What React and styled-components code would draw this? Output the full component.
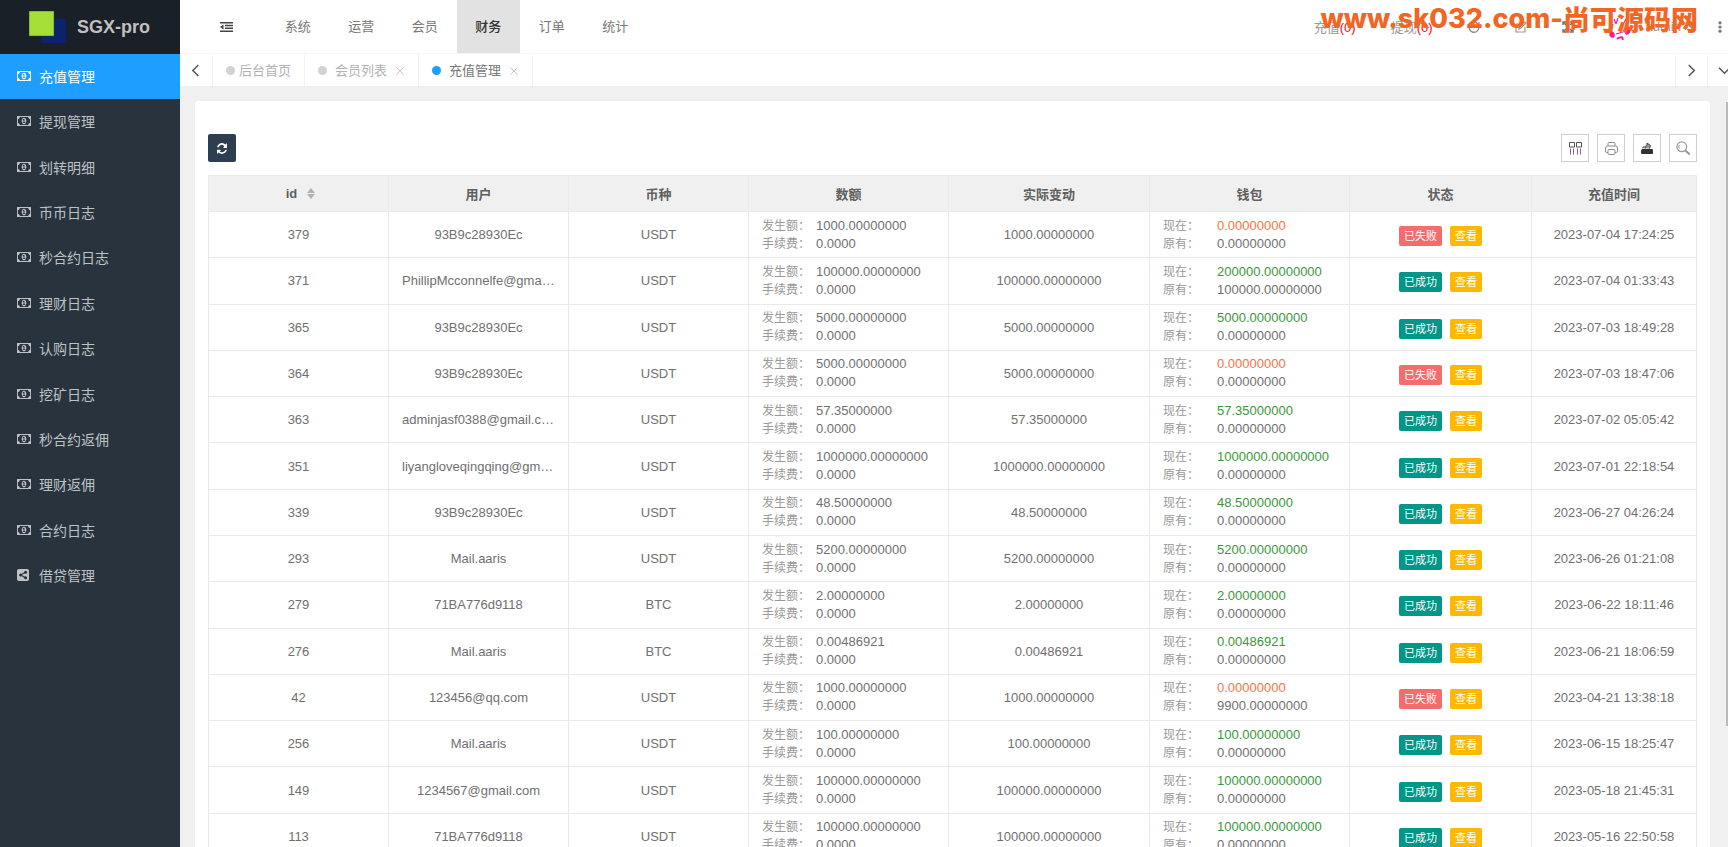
import React, { useState } from 'react'
import styled, { createGlobalStyle } from 'styled-components'

const sideMenu = [
    '充值管理', '提现管理', '划转明细', '币币日志', '秒合约日志', '理财日志',
    '认购日志', '挖矿日志', '秒合约返佣', '理财返佣', '合约日志', '借贷管理',
]

const topMenu = ['系统', '运营', '会员', '财务', '订单', '统计']

const records = [
    { id: 379, user: '93B9c28930Ec', coin: 'USDT', amount: '1000.00000000', now: '0.00000000', old: '0.00000000', ok: false, time: '2023-07-04 17:24:25' },
    { id: 371, user: 'PhillipMcconnelfe@gmail.com', coin: 'USDT', amount: '100000.00000000', now: '200000.00000000', old: '100000.00000000', ok: true, time: '2023-07-04 01:33:43' },
    { id: 365, user: '93B9c28930Ec', coin: 'USDT', amount: '5000.00000000', now: '5000.00000000', old: '0.00000000', ok: true, time: '2023-07-03 18:49:28' },
    { id: 364, user: '93B9c28930Ec', coin: 'USDT', amount: '5000.00000000', now: '0.00000000', old: '0.00000000', ok: false, time: '2023-07-03 18:47:06' },
    { id: 363, user: 'adminjasf0388@gmail.com', coin: 'USDT', amount: '57.35000000', now: '57.35000000', old: '0.00000000', ok: true, time: '2023-07-02 05:05:42' },
    { id: 351, user: 'liyangloveqingqing@gmail.com', coin: 'USDT', amount: '1000000.00000000', now: '1000000.00000000', old: '0.00000000', ok: true, time: '2023-07-01 22:18:54' },
    { id: 339, user: '93B9c28930Ec', coin: 'USDT', amount: '48.50000000', now: '48.50000000', old: '0.00000000', ok: true, time: '2023-06-27 04:26:24' },
    { id: 293, user: 'Mail.aaris', coin: 'USDT', amount: '5200.00000000', now: '5200.00000000', old: '0.00000000', ok: true, time: '2023-06-26 01:21:08' },
    { id: 279, user: '71BA776d9118', coin: 'BTC', amount: '2.00000000', now: '2.00000000', old: '0.00000000', ok: true, time: '2023-06-22 18:11:46' },
    { id: 276, user: 'Mail.aaris', coin: 'BTC', amount: '0.00486921', now: '0.00486921', old: '0.00000000', ok: true, time: '2023-06-21 18:06:59' },
    { id: 42, user: '123456@qq.com', coin: 'USDT', amount: '1000.00000000', now: '0.00000000', old: '9900.00000000', ok: false, time: '2023-04-21 13:38:18' },
    { id: 256, user: 'Mail.aaris', coin: 'USDT', amount: '100.00000000', now: '100.00000000', old: '0.00000000', ok: true, time: '2023-06-15 18:25:47' },
    { id: 149, user: '1234567@gmail.com', coin: 'USDT', amount: '100000.00000000', now: '100000.00000000', old: '0.00000000', ok: true, time: '2023-05-18 21:45:31' },
    { id: 113, user: '71BA776d9118', coin: 'USDT', amount: '100000.00000000', now: '100000.00000000', old: '0.00000000', ok: true, time: '2023-05-16 22:50:58' },
]

const MoneyIcon = () => (
    <svg width="14" height="10" viewBox="0 256 1920 1280" fill="currentColor" preserveAspectRatio="none">
        <path d="M768 1152h384v-96h-128v-448h-114l-148 137 77 80q42-37 55-57h2v288h-128v96zm512-256q0 70-21 142t-59.5 134-101.5 101-138 39-138-39-101.5-101-59.5-134-21-142 21-142 59.5-134 101.5-101 138-39 138 39 101.5 101 59.5 134 21 142zm512 256v-512q-106 0-181-75t-75-181h-1152q0 106-75 181t-181 75v512q106 0 181 75t75 181h1152q0-106 75-181t181-75zm128-832v1152q0 26-19 45t-45 19h-1792q-26 0-45-19t-19-45v-1152q0-26 19-45t45-19h1792q26 0 45 19t19 45z" />
    </svg>
)

const ShareIcon = () => (
    <svg width="12" height="12" viewBox="0 0 12 12">
        <rect width="12" height="12" rx="2" fill="currentColor" />
        <path d="M8.6 3.2 3.6 6l5 2.8" fill="none" stroke="#28333e" strokeWidth="1.1" />
        <circle cx="8.6" cy="3.2" r="1.5" fill="#28333e" />
        <circle cx="3.6" cy="6" r="1.5" fill="#28333e" />
        <circle cx="8.6" cy="8.8" r="1.5" fill="#28333e" />
    </svg>
)

const RefreshIcon = () => (
    <svg width="10" height="11" viewBox="0 0 1536 1664" fill="currentColor">
        <path d="M1511 1056q0 5-1 7-64 268-268 434.5T764 1664q-146 0-282.5-55T238 1452l-129 129q-19 19-45 19t-45-19-19-45v-448q0-26 19-45t45-19h448q26 0 45 19t19 45-19 45l-137 137q71 66 161 102t187 36q134 0 250-65t186-179q11-17 53-117 8-23 30-23h192q13 0 22.500 9.500t9.500 22.500zm25-800v448q0 26-19 45t-45 19h-448q-26 0-45-19t-19-45 19-45l138-138Q969 256 768 256q-134 0-250 65T332 500q-11 17-53 117-8 23-30 23H50q-13 0-22.500-9.500T18 608v-7q65-268 270-434.500T768 0q146 0 284 55.500T1297 212l130-129q19-19 45-19t45 19 19 45z" />
    </svg>
)

const Chevron = ({ dir }) => {
    const paths = { left: 'M9 1 3 7l6 6', right: 'M4 1l6 6-6 6', down: 'M1 4l6 6 6-6' }
    return (
        <svg width="13" height="13" viewBox="0 0 14 14" fill="none" stroke="#555" strokeWidth="1.600">
            <path d={paths[dir]} />
        </svg>
    )
}

function Sidebar() {
    const [active, setActive] = useState('充值管理')

    return (
        <Aside>
            <Logo>
                <svg width="37" height="32" viewBox="0 0 37 32">
                    <rect x="12" y="8" width="25" height="24" fill="#0b226c" />
                    <rect x="0" y="0" width="25" height="25" fill="#a4de37" stroke="#33501f" strokeWidth="0.500" />
                </svg>
                <span>SGX-pro</span>
            </Logo>
            <SideNav>
                {
                    sideMenu.map((name) => (
                        <SideLink key={name} href="#" $active={name === active} onClick={() => setActive(name)}>
                            <SideIcon>{name === '借贷管理' ? <ShareIcon /> : <MoneyIcon />}</SideIcon>
                            {name}
                        </SideLink>
                    ))
                }
            </SideNav>
        </Aside>
    )
}

function Header() {
    return (
        <TopBar>
            <FoldButton aria-label="menu">
                <svg width="13" height="10" viewBox="0 0 13 10" fill="#444">
                    <path d="M0 0h13v1.500H0zM5 2.800h8v1.500H5zM5 5.600h8v1.500H5zM0 8.500h13V10H0zM3.500 2.600v4.800L0 5z" />
                </svg>
            </FoldButton>
            <TopNav>
                {
                    topMenu.map((name) => <TopLink key={name} href="#" $active={name === '财务'}>{name}</TopLink>)
                }
            </TopNav>
            <Tools>
                <ToolLink href="#">充值<Count>(0)</Count></ToolLink>
                <ToolLink href="#">提现<Count>(0)</Count></ToolLink>
                <ToolButton aria-label="refresh">
                    <svg width="12" height="12" viewBox="0 0 12 12" fill="none" stroke="#888" strokeWidth="1.300">
                        <path d="M10.500 4A5 5 0 1 0 11 6.500M11 1v3.300H7.800" />
                    </svg>
                </ToolButton>
                <ToolButton aria-label="note">
                    <svg width="12" height="12" viewBox="0 0 12 12" fill="none" stroke="#999" strokeWidth="1.200">
                        <path d="M1 3h5M1 3v8h9V6M4 8l1-3 5-4 1 1-5 5z" />
                    </svg>
                </ToolButton>
                <ToolButton aria-label="fullscreen">
                    <svg width="12" height="12" viewBox="0 0 12 12" fill="none" stroke="#777" strokeWidth="1.500">
                        <path d="M1 4V1h3M8 1h3v3M11 8v3H8M4 11H1V8M1 1l3 3M11 1 8 4M11 11 8 8M1 11l3-3" />
                    </svg>
                </ToolButton>
                <User href="#">
                    <svg width="22" height="28" viewBox="0 0 22 28" fill="none" stroke="#ff1a8c">
                        <path d="M5 6l2 5M9 5 7 11M17 6l-3 5M18 11l2 5M4 11l-2 6M7 21l7-2M15 18l4-2" strokeWidth="1.200" />
                        <path d="M1 19c-1 4 1 6 4 5 1-4-1-6-4-5zM18 16c-3 3-2 6 1 5 2-1 3-4 2-6z" fill="#ff1a8c" />
                        <path d="M8 26c2-2 5-2 6-1M13 24l1 3" strokeWidth="2" />
                    </svg>
                    <span>admin</span>
                    <svg width="9" height="5" viewBox="0 0 9 5" fill="#999"><path d="M0 0h9L4.500 5z" /></svg>
                </User>
                <MoreButton aria-label="more">
                    <svg width="4" height="12" viewBox="0 0 4 12" fill="#777">
                        <circle cx="2" cy="1.800" r="1.600" /><circle cx="2" cy="6" r="1.600" /><circle cx="2" cy="10.200" r="1.600" />
                    </svg>
                </MoreButton>
            </Tools>
            <SiteMark><b>www.sk032.com-</b><strong>尚可源码网</strong></SiteMark>
        </TopBar>
    )
}

function Tabs() {
    const close = (
        <CloseButton aria-label="close">
            <svg width="8" height="8" viewBox="0 0 8 8" stroke="#c4c4c4"><path d="M0.500 0.500l7 7M7.500 0.500l-7 7" /></svg>
        </CloseButton>
    )

    return (
        <TabBar>
            <Arrow aria-label="prev"><Chevron dir="left" /></Arrow>
            <Tab $gap={4}><Dot /><a href="#">后台首页</a></Tab>
            <Tab $gap={8}><Dot /><a href="#">会员列表</a>{close}</Tab>
            <Tab $gap={8} $active><Dot $active /><a href="#">充值管理</a>{close}</Tab>
            <Spacer />
            <Arrow aria-label="next" $side><Chevron dir="right" /></Arrow>
            <LastArrow aria-label="list"><Chevron dir="down" /></LastArrow>
        </TabBar>
    )
}

function TableTools() {
    return (
        <Toolbar>
            <ReloadButton aria-label="reload"><RefreshIcon /></ReloadButton>
            <Spacer />
            <SquareButton aria-label="columns">
                <svg width="13" height="13" viewBox="0 0 13 13" fill="none" stroke="#555">
                    <path d="M.5 .5H5.500v4.500H.5zM7.500 .5H12.500v4.500H7.500z" />
                    <path d="M1.500 6.500v6M4.500 6.500v6M8.500 6.500v6M11.500 6.500v6" stroke="#8d5b93" />
                </svg>
            </SquareButton>
            <SquareButton aria-label="print">
                <svg width="13" height="13" viewBox="0 0 13 13" fill="none" stroke="#8d8d8d">
                    <path d="M3 4V1.500Q3 .5 4 .5h5q1 0 1 1V4M3 10.500H1.500Q.5 10.500 .5 9V6Q.5 4 2.500 4h8q2 0 2 2v3q0 1.500-1 1.500H10" />
                    <rect x="3" y="7.500" width="7" height="5" rx="1" />
                </svg>
            </SquareButton>
            <SquareButton aria-label="export">
                <svg width="12" height="12" viewBox="0 0 12 12">
                    <path d="M1 7h10.500L12 8.500V11q0 1-1 1H1q-1 0-1-1V8.500z" fill="#2f3138" />
                    <path d="M4 6.500Q4 3.500 6 3.500V1L9.500 3.500 8.500 6.500" fill="#999" stroke="#444" />
                    <path d="M2 6.500V5h2" fill="none" stroke="#444" />
                </svg>
            </SquareButton>
            <SquareButton aria-label="search">
                <svg width="14" height="14" viewBox="0 0 14 14" fill="none" stroke="#999">
                    <circle cx="5.800" cy="5.800" r="4.900" strokeWidth="1.200" />
                    <path d="M3.300 7.500a3 3 0 0 1 0-3.500" />
                    <path d="M10.200 10.200l2.800 2.600" strokeWidth="2.200" strokeLinecap="round" />
                </svg>
            </SquareButton>
        </Toolbar>
    )
}

function RecordTable() {
    return (
        <Table>
            <colgroup>
                <Col $w={180} /><Col $w={180} /><Col $w={180} /><Col $w={200} />
                <Col $w={201} /><Col $w={200} /><Col $w={182} /><Col $w={165} />
            </colgroup>
            <thead>
                <tr>
                    <th>
                        <SortLabel>
                            id
                            <svg width="8" height="11" viewBox="0 0 8 11" fill="#b2b2b2"><path d="M4 0l4 5H0zM0 6h8l-4 5z" /></svg>
                        </SortLabel>
                    </th>
                    <th>用户</th>
                    <th>币种</th>
                    <th>数额</th>
                    <th>实际变动</th>
                    <th>钱包</th>
                    <th>状态</th>
                    <th>充值时间</th>
                </tr>
            </thead>
            <tbody>
                {
                    records.map((r) => (
                        <tr key={r.id}>
                            <td>{r.id}</td>
                            <td>{r.user}</td>
                            <td>{r.coin}</td>
                            <td>
                                <Pair><dt>发生额：</dt><dd>{r.amount}</dd></Pair>
                                <Pair><dt>手续费：</dt><dd>0.0000</dd></Pair>
                            </td>
                            <td>{r.amount}</td>
                            <td>
                                <Pair><dt>现在：</dt><Changed $ok={r.ok}>{r.now}</Changed></Pair>
                                <Pair><dt>原有：</dt><dd>{r.old}</dd></Pair>
                            </td>
                            <td>
                                <Actions>
                                    <Badge $color={r.ok ? '#009688' : '#f56c6c'}>{r.ok ? '已成功' : '已失败'}</Badge>
                                    <Badge as="button" $color="#ffb800">查看</Badge>
                                </Actions>
                            </td>
                            <td>{r.time}</td>
                        </tr>
                    ))
                }
            </tbody>
        </Table>
    )
}

export default function App() {
    return (
        <>
            <GlobalStyle />
            <Layout>
                <Sidebar />
                <Main>
                    <Header />
                    <Tabs />
                    <Body>
                        <Card>
                            <TableTools />
                            <RecordTable />
                        </Card>
                        <ScrollThumb />
                    </Body>
                </Main>
            </Layout>
        </>
    )
}


const GlobalStyle = createGlobalStyle`
    *{
        box-sizing:border-box;
    }
    body{
        margin:0;
        font-family:"Liberation Sans", "Noto Sans CJK SC", sans-serif;
        font-size:13px;
        color:#707070;
        background:#f0f0f0;
    }
    a{
        color:inherit;
        text-decoration:none;
    }
    button{
        font:inherit;
        color:inherit;
        background:transparent;
        border:none;
        padding:0;
        cursor:pointer;
    }
    svg{
        display:block;
        flex-shrink:0;
    }
`;

const Layout = styled.div`
    display:flex;
    height:100vh;
    overflow:hidden;
`;

const Aside = styled.aside`
    width:180px;
    flex-shrink:0;
    background:#28333e;
    color:#bfc2c5;
`;

const Logo = styled.div`
    display:flex;
    align-items:center;
    gap:11px;
    height:54px;
    padding-left:29px;
    background:#192027;
    font-size:18px;
    font-weight:700;
    color:#c2bfbd;
`;

const SideNav = styled.nav`
    display:grid;
    grid-auto-rows:1fr;
    min-height:545px;
`;

const SideLink = styled.a`
    display:flex;
    align-items:center;
    padding:0 0 2px 17px;
    font-size:14px;
    color:${(props) => (props.$active ? '#fff' : 'inherit')};
    background:${(props) => (props.$active ? '#1e9fff' : 'transparent')};
`;

const SideIcon = styled.span`
    width:22px;
`;

const Main = styled.main`
    flex:1;
    min-width:0;
    display:flex;
    flex-direction:column;
`;

const TopBar = styled.header`
    position:relative;
    display:flex;
    height:54px;
    flex-shrink:0;
    background:#fff;
    border-bottom:1px solid #f6f6f6;
`;

const FoldButton = styled.button`
    width:86px;
    padding-left:40px;
`;

const TopNav = styled.nav`
    display:grid;
    grid-template-columns:repeat(6, 1fr);
    width:381px;
`;

const TopLink = styled.a`
    display:flex;
    align-items:center;
    justify-content:center;
    padding-bottom:2px;
    color:${(props) => (props.$active ? '#333' : '#777')};
    font-weight:${(props) => (props.$active ? 500 : 400)};
    background:${(props) => (props.$active ? '#e2e2e2' : 'transparent')};
`;

const Tools = styled.div`
    display:flex;
    flex:1;
    align-items:center;
    justify-content:flex-end;
    gap:35px;
    padding-right:6px;
`;

const ToolLink = styled.a`
    color:#999;
    white-space:nowrap;
`;

const Count = styled.span`
    color:#f00;
`;

const ToolButton = styled.button`
    width:12px;
`;

const User = styled.a`
    display:flex;
    align-items:center;
    color:#999;
    span{
        margin:0 6px 0 15px;
    }
`;

const MoreButton = styled.button`
    margin-left:-13px;
`;

/* site name printed over the right end of the bar */
const SiteMark = styled.div`
    position:absolute;
    right:30px;
    top:0;
    display:flex;
    align-items:center;
    color:#f26522;
    line-height:38px;
    white-space:nowrap;
    pointer-events:none;
    b{
        font-family:Inter, "Liberation Sans", sans-serif;
        font-size:27px;
        font-weight:800;
    }
    strong{
        font-family:"Noto Sans CJK SC", sans-serif;
        font-size:27px;
        font-weight:900;
    }
`;

const TabBar = styled.div`
    display:flex;
    height:32px;
    flex-shrink:0;
    background:#fff;
`;

const Arrow = styled.button`
    display:flex;
    align-items:center;
    justify-content:center;
    width:33px;
    border-right:1px solid #f3f3f3;
    border-left:${(props) => (props.$side ? '1px solid #f3f3f3' : 'none')};
`;

const LastArrow = styled.button`
    width:20px;
    padding-left:10px;
    overflow:hidden;
`;

const Tab = styled.div`
    display:flex;
    align-items:center;
    gap:${(props) => props.$gap}px;
    padding:0 13px;
    border-right:1px solid #f3f3f3;
    color:${(props) => (props.$active ? '#777' : '#b2b2b2')};
    a{
        padding-bottom:1px;
    }
`;

const Dot = styled.i`
    width:9px;
    height:9px;
    border-radius:50%;
    background:${(props) => (props.$active ? '#1e9fff' : '#d2d2d2')};
`;

const CloseButton = styled.button`
    padding:2px 1px 0;
`;

const Spacer = styled.div`
    flex:1;
`;

const Body = styled.section`
    position:relative;
    flex:1;
    min-height:0;
    padding:15px 18px 0 15px;
    overflow:hidden;
`;

const ScrollThumb = styled.div`
    position:absolute;
    top:16px;
    right:0;
    width:2px;
    height:82%;
    background:#b9b9b9;
`;

const Card = styled.div`
    padding:33px 13px 13px;
    background:#fff;
    border-radius:4px;
`;

const Toolbar = styled.div`
    display:flex;
    gap:8px;
    margin-bottom:13px;
`;

const ReloadButton = styled.button`
    display:flex;
    align-items:center;
    justify-content:center;
    width:28px;
    height:28px;
    color:#fff;
    background:#2c3e50;
    border-radius:2px;
`;

const SquareButton = styled.button`
    display:flex;
    align-items:center;
    justify-content:center;
    width:28px;
    height:28px;
    border:1px solid #d0d0d0;
`;

const Table = styled.table`
    width:100%;
    height:685px;
    table-layout:fixed;
    border-collapse:collapse;
    thead tr{
        height:36px;
    }
    th,td{
        padding:0 13px;
        border:1px solid #e9e9e9;
        text-align:center;
        overflow:hidden;
        white-space:nowrap;
        text-overflow:ellipsis;
    }
    th{
        padding-bottom:1px;
        font-weight:700;
        color:#606060;
        background:#f0f0f0;
    }
    td{
        height:45px;
    }
`;

const Col = styled.col`
    width:${(props) => props.$w}px;
`;

const SortLabel = styled.span`
    display:inline-flex;
    align-items:center;
    gap:10px;
    padding-left:4px;
`;

const Pair = styled.dl`
    display:flex;
    margin:0;
    line-height:18px;
    dt{
        width:54px;
        text-align:left;
        font-size:12px;
        color:#999;
    }
    dd{
        margin:0;
    }
`;

const Changed = styled.dd`
    color:${(props) => (props.$ok ? '#3a973a' : '#ff7043')};
`;

const Actions = styled.div`
    display:flex;
    justify-content:center;
    gap:8px;
    padding-top:3px;
`;

const Badge = styled.span`
    height:20px;
    padding:0 5px;
    border-radius:2px;
    font-size:11px;
    line-height:20px;
    color:#fff;
    background:${(props) => props.$color};
`;
